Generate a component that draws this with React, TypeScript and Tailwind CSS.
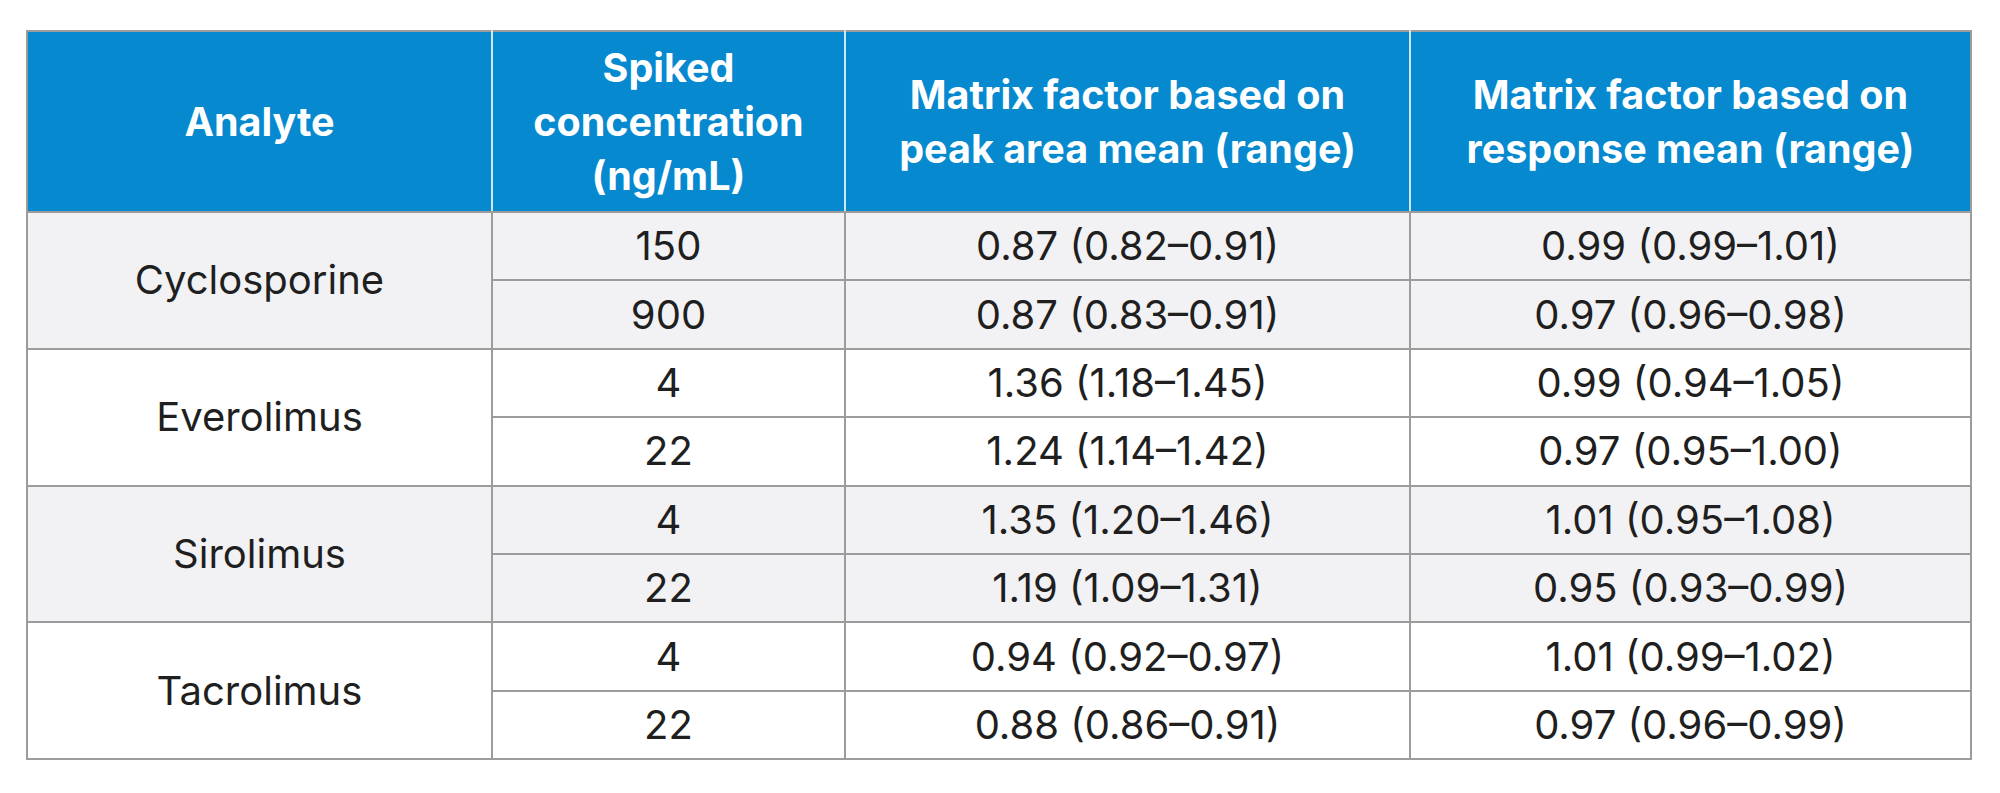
const groups = [
  {
    analyte: "Cyclosporine",
    rows: [
      ["150", "0.87 (0.82–0.91)", "0.99 (0.99–1.01)"],
      ["900", "0.87 (0.83–0.91)", "0.97 (0.96–0.98)"],
    ],
  },
  {
    analyte: "Everolimus",
    rows: [
      ["4", "1.36 (1.18–1.45)", "0.99 (0.94–1.05)"],
      ["22", "1.24 (1.14–1.42)", "0.97 (0.95–1.00)"],
    ],
  },
  {
    analyte: "Sirolimus",
    rows: [
      ["4", "1.35 (1.20–1.46)", "1.01 (0.95–1.08)"],
      ["22", "1.19 (1.09–1.31)", "0.95 (0.93–0.99)"],
    ],
  },
  {
    analyte: "Tacrolimus",
    rows: [
      ["4", "0.94 (0.92–0.97)", "1.01 (0.99–1.02)"],
      ["22", "0.88 (0.86–0.91)", "0.97 (0.96–0.99)"],
    ],
  },
];

const headCell =
  "border-2 border-[#9c9c9c] bg-[#0689cf] text-white font-bold text-[39.5px] leading-[54px] text-center align-middle";
const bodyCell = "border-2 border-[#9c9c9c] text-center align-middle p-0";

export default function App() {
  return (
    <div className="min-h-[793px] w-[2000px] bg-white pl-[26px] pt-[30px] font-['Inter',sans-serif] text-[#1f1f1f]">
      <table className="w-[1944px] table-fixed border-collapse">
        <colgroup>
          <col className="w-[465px]" />
          <col className="w-[353px]" />
          <col className="w-[565px]" />
          <col className="w-[561px]" />
        </colgroup>
        <thead>
          <tr className="h-[181px]">
            <th className={`${headCell} border-r-[#cfe7f5]`}>Analyte</th>
            <th className={`${headCell} border-r-[#cfe7f5]`}>
              Spiked
              <br />
              concentration
              <br />
              (ng/mL)
            </th>
            <th className={`${headCell} border-r-[#cfe7f5]`}>
              Matrix factor based on
              <br />
              peak area mean (range)
            </th>
            <th className={headCell}>
              Matrix factor based on
              <br />
              response mean (range)
            </th>
          </tr>
        </thead>
        <tbody>
          {groups.map((g, gi) =>
            g.rows.map((r, ri) => (
              <tr
                key={`${g.analyte}-${ri}`}
                className={`h-[68.4px] text-[40px] ${gi % 2 === 0 ? "bg-[#f2f2f4]" : "bg-white"}`}
              >
                {ri === 0 && (
                  <td rowSpan={2} className={bodyCell}>
                    {g.analyte}
                  </td>
                )}
                <td className={bodyCell}>{r[0]}</td>
                <td className={bodyCell}>{r[1]}</td>
                <td className={bodyCell}>{r[2]}</td>
              </tr>
            ))
          )}
        </tbody>
      </table>
    </div>
  );
}
